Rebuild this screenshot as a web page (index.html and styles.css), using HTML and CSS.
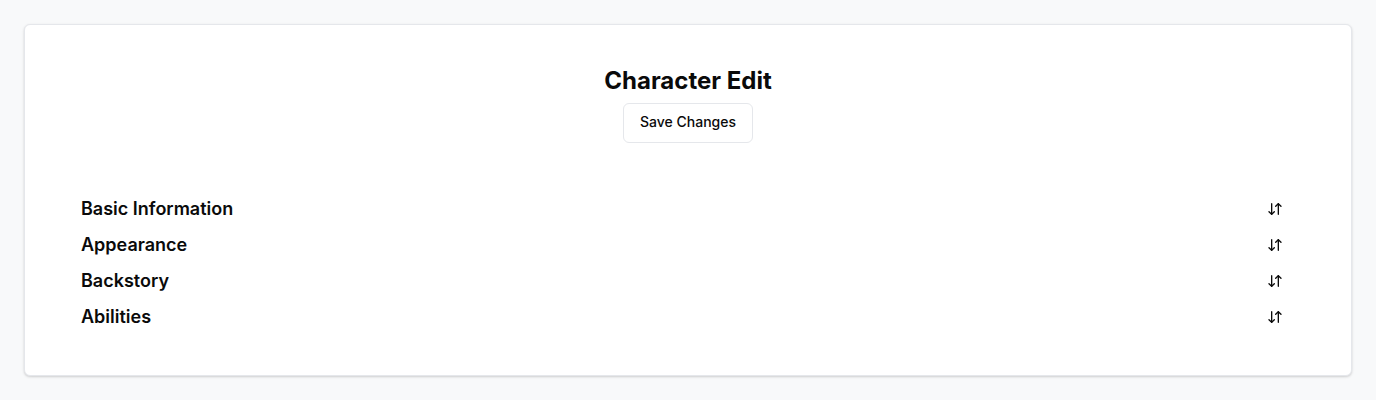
FILE: index.html
```html
<!DOCTYPE html>
<html lang="en">
<head>
<meta charset="utf-8">
<title>Character Edit</title>
<link rel="stylesheet" href="styles.css">
</head>
<body>
<div class="card">
  <div class="header">
    <h1 class="title">Character Edit</h1>
    <button class="btn-outline">Save Changes</button>
  </div>
  <div class="sections">
    <div class="row"><h3 class="row-title">Basic Information</h3><button class="btn-icon" aria-label="Toggle"><svg viewBox="0 0 24 24" width="16" height="16" fill="none" stroke="currentColor" stroke-width="2" stroke-linecap="round" stroke-linejoin="round"><path d="m3 16 4 4 4-4"/><path d="M7 20V4"/><path d="m21 8-4-4-4 4"/><path d="M17 4v16"/></svg></button></div>
    <div class="row"><h3 class="row-title">Appearance</h3><button class="btn-icon" aria-label="Toggle"><svg viewBox="0 0 24 24" width="16" height="16" fill="none" stroke="currentColor" stroke-width="2" stroke-linecap="round" stroke-linejoin="round"><path d="m3 16 4 4 4-4"/><path d="M7 20V4"/><path d="m21 8-4-4-4 4"/><path d="M17 4v16"/></svg></button></div>
    <div class="row"><h3 class="row-title">Backstory</h3><button class="btn-icon" aria-label="Toggle"><svg viewBox="0 0 24 24" width="16" height="16" fill="none" stroke="currentColor" stroke-width="2" stroke-linecap="round" stroke-linejoin="round"><path d="m3 16 4 4 4-4"/><path d="M7 20V4"/><path d="m21 8-4-4-4 4"/><path d="M17 4v16"/></svg></button></div>
    <div class="row"><h3 class="row-title">Abilities</h3><button class="btn-icon" aria-label="Toggle"><svg viewBox="0 0 24 24" width="16" height="16" fill="none" stroke="currentColor" stroke-width="2" stroke-linecap="round" stroke-linejoin="round"><path d="m3 16 4 4 4-4"/><path d="M7 20V4"/><path d="m21 8-4-4-4 4"/><path d="M17 4v16"/></svg></button></div>
  </div>
</div>
</body>
</html>
```
FILE: styles.css
```css
* { box-sizing: border-box; }
html, body { margin: 0; }
body {
  background: #f8f9fa;
  padding: 24px;
  font-family: Inter, "Noto Sans", sans-serif;
  color: #0a0a0a;
}
.card {
  background: #ffffff;
  border: 1px solid #e5e7eb;
  border-radius: 6px;
  box-shadow: 0 1px 3px rgba(0,0,0,0.12), 0 1px 2px rgba(0,0,0,0.06);
  padding: 40px 56px 40px;
}
.header {
  display: flex;
  flex-direction: column;
  align-items: center;
  gap: 6px;
}
.title {
  margin: 0;
  font-size: 24px;
  line-height: 32px;
  font-weight: 700;
}
.btn-outline {
  height: 40px;
  padding: 0 16px 3px;
  border: 1px solid #e5e7eb;
  border-radius: 6px;
  background: #fff;
  font-family: inherit;
  font-size: 14px;
  line-height: 20px;
  font-weight: 500;
  color: #0a0a0a;
}
.sections {
  margin-top: 48px;
  display: flex;
  flex-direction: column;
}
.row {
  height: 36px;
  display: flex;
  align-items: center;
  justify-content: space-between;
}
.row-title {
  margin: 0;
  font-size: 18px;
  line-height: 28px;
  font-weight: 600;
}
.btn-icon {
  width: 36px;
  height: 36px;
  display: flex;
  align-items: center;
  justify-content: center;
  border: none;
  background: transparent;
  padding: 0 4px 0 0;
  color: #0a0a0a;
}
```
